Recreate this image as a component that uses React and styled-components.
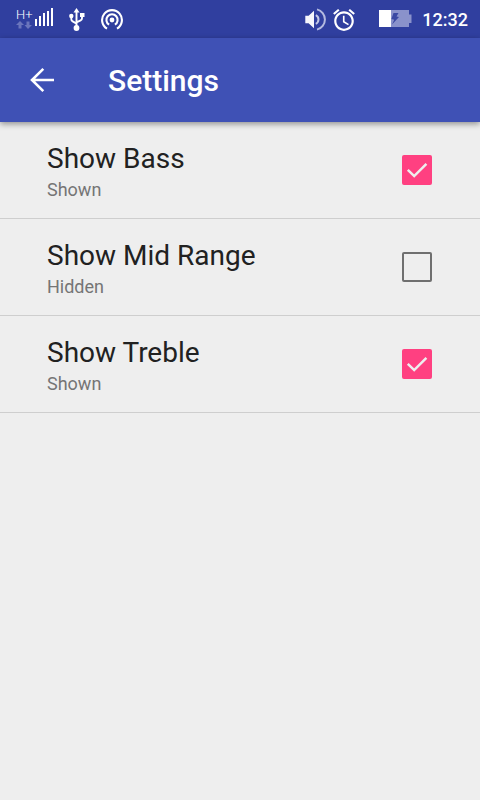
import React, { useState } from "react";
import styled, { createGlobalStyle } from "styled-components";

const GlobalStyle = createGlobalStyle`
  *, *::before, *::after { box-sizing: border-box; }
  body {
    margin: 0;
    background: #eeeeee;
    font-family: Roboto, sans-serif;
  }
`;

const StatusBar = styled.div`
  display: flex;
  align-items: center;
  justify-content: space-between;
  height: 38px;
  padding: 2px 12px 0 16px;
  background: #303f9f;
  color: #ffffff;
`;

const StatusGroup = styled.div`
  display: flex;
  align-items: center;
  gap: ${(p) => p.$gap}px;

  svg {
    display: block;
    flex: none;
  }
`;

const Network = styled.div`
  display: flex;
  align-items: flex-start;
  gap: 3px;
  height: 24px;
`;

const NetworkType = styled.div`
  display: flex;
  flex-direction: column;
  width: 16px;
  font-size: 13px;
  font-weight: 300;
  line-height: 13px;
`;

const Clock = styled.time`
  font-size: 18px;
  font-weight: 500;
  line-height: 24px;
`;

const AppBar = styled.header`
  display: flex;
  align-items: center;
  gap: 48px;
  height: 84px;
  padding: 0 24px;
  background: #3f51b5;
  color: #ffffff;
  box-shadow: 0 2px 6px rgba(0, 0, 0, 0.4);
`;

const BackButton = styled.button`
  display: block;
  width: 36px;
  height: 36px;
  padding: 0;
  border: 0;
  background: none;
  color: inherit;
  cursor: pointer;

  svg {
    display: block;
  }
`;

const Title = styled.h1`
  margin: 0;
  padding-top: 2px;
  font-size: 30px;
  font-weight: 500;
  line-height: 36px;
`;

const PreferenceList = styled.main`
  display: flex;
  flex-direction: column;
`;

const Preference = styled.label`
  display: flex;
  align-items: center;
  justify-content: space-between;
  min-height: 97px;
  padding: 0 48px 0 47px;
  border-bottom: 1px solid #cecece;
  cursor: pointer;
`;

const PreferenceText = styled.span`
  display: flex;
  flex-direction: column;
  padding-top: 4px;
`;

const PreferenceName = styled.span`
  color: #212121;
  font-size: 28px;
  line-height: 36px;
`;

const PreferenceSummary = styled.span`
  color: #757575;
  font-size: 18px;
  line-height: 26px;
`;

const CheckSlot = styled.span`
  display: grid;
  flex: none;

  > * {
    grid-area: 1 / 1;
  }

  svg {
    pointer-events: none;
  }
`;

const CheckInput = styled.input`
  appearance: none;
  width: 30px;
  height: 30px;
  margin: 0;
  border: 2px solid #6f6f6f;
  border-radius: 2px;
  cursor: pointer;

  &:checked {
    border-color: #ff4081;
    background: #ff4081;
  }
`;

const DataArrows = () => (
  <svg width="16" height="8" viewBox="0 0 16 8" fill="#6a75bc" aria-hidden="true">
    <path d="M4 0L8 4H5.5V7.5H2.5V4H0Z" />
    <path d="M12 8L8.5 4H10.5V0.5H13.5V4H16Z" />
  </svg>
);

const SignalBars = () => (
  <svg width="18" height="18" viewBox="0 0 18 18" fill="#fff" aria-hidden="true">
    <rect x="0" y="11" width="2" height="7" />
    <rect x="4" y="8" width="2" height="10" />
    <rect x="8" y="5" width="2" height="13" />
    <rect x="12" y="3" width="2" height="15" />
    <rect x="16" y="0" width="2" height="18" />
  </svg>
);

const UsbIcon = () => (
  <svg width="16" height="24" viewBox="0 0 16 24" fill="#fff" aria-hidden="true">
    <path d="M7.5 0L10.5 4.5H4.5Z" />
    <circle cx="7.5" cy="20" r="2.9" />
    <circle cx="2.3" cy="8" r="2.2" />
    <rect x="11" y="5" width="4.5" height="4" />
    <path
      d="M7.5 3V19M2.3 8V11Q2.3 12.6 3.7 13.4L7.5 15.6M13 8V10.2Q13 11.6 11.6 12.3L7.5 14.4"
      fill="none"
      stroke="#fff"
      strokeWidth="1.9"
    />
  </svg>
);

const HotspotIcon = () => (
  <svg width="22" height="22" viewBox="0 0 22 22" fill="none" stroke="#fff" strokeWidth="2.1" aria-hidden="true">
    <circle cx="11" cy="11" r="2.4" fill="#fff" stroke="none" />
    <path d="M6 19.6A9.9 9.9 0 1 1 16 19.6" />
    <path d="M8.1 15.7A5.6 5.6 0 1 1 13.9 15.7" />
  </svg>
);

const VolumeIcon = () => (
  <svg width="22" height="24" viewBox="0 0 22 24" fill="none" aria-hidden="true">
    <path d="M0.3 7.8H3.6L9 2.8V20.2L3.6 15.2H0.3Z" fill="#f6f7fc" />
    <path d="M10.8 7.2A4.8 4.8 0 0 1 10.8 15.8" stroke="#c2c7e5" strokeWidth="2" />
    <path d="M12 1.4A10.4 10.4 0 0 1 12 21.6" stroke="#b4bae0" strokeWidth="2" />
  </svg>
);

const AlarmIcon = () => (
  <svg width="22" height="22" viewBox="2 1.9 20 20.2" fill="#fff" aria-hidden="true">
    <path d="M22 5.72l-4.6-3.86-1.29 1.53 4.6 3.86L22 5.72zM7.88 3.39L6.6 1.86 2 5.71l1.29 1.53 4.59-3.85zM12.5 8H11v6l4.75 2.85.75-1.23-4-2.37V8zM12 4c-4.97 0-9 4.03-9 9s4.02 9 9 9c4.97 0 9-4.03 9-9s-4.03-9-9-9zm0 16c-3.87 0-7-3.13-7-7s3.13-7 7-7 7 3.13 7 7-3.13 7-7 7z" />
  </svg>
);

const BatteryIcon = () => (
  <svg width="33" height="20" viewBox="0 0 33 20" aria-hidden="true">
    <path d="M12 0H30V4.5H32.5V13H30V17H12Z" fill="#8a92cb" />
    <rect width="12" height="17" fill="#fff" />
    <path d="M14.5 3H19.5L17.5 6.5L20 7L13 14.5L15.2 9.8L12.4 9Z" fill="#3a48a3" />
  </svg>
);

const BackIcon = () => (
  <svg width="36" height="36" viewBox="0 0 36 36" fill="none" stroke="#fff" strokeWidth="2.6" aria-hidden="true">
    <path d="M30 18H8M19.3 6.8L8 18L19.3 29.2" />
  </svg>
);

const CheckMark = () => (
  <svg width="30" height="30" viewBox="0 0 30 30" fill="none" stroke="#eeeeee" strokeWidth="2.5" aria-hidden="true">
    <path d="M5.8 14.8L12.2 21.1L24.4 8.9" />
  </svg>
);

const initialPreferences = [
  { id: "bass", name: "Show Bass", shown: true },
  { id: "mid", name: "Show Mid Range", shown: false },
  { id: "treble", name: "Show Treble", shown: true },
];

export default function App() {
  const [preferences, setPreferences] = useState(initialPreferences);

  const toggle = (id) =>
    setPreferences((list) =>
      list.map((item) => (item.id === id ? { ...item, shown: !item.shown } : item))
    );

  return (
    <>
      <GlobalStyle />
      <StatusBar>
        <StatusGroup $gap={16}>
          <Network>
            <NetworkType>
              H+
              <DataArrows />
            </NetworkType>
            <SignalBars />
          </Network>
          <UsbIcon />
          <HotspotIcon />
        </StatusGroup>
        <StatusGroup $gap={10}>
          <StatusGroup $gap={24}>
            <StatusGroup $gap={6}>
              <VolumeIcon />
              <AlarmIcon />
            </StatusGroup>
            <BatteryIcon />
          </StatusGroup>
          <Clock>12:32</Clock>
        </StatusGroup>
      </StatusBar>
      <AppBar>
        <BackButton type="button" aria-label="Back">
          <BackIcon />
        </BackButton>
        <Title>Settings</Title>
      </AppBar>
      <PreferenceList>
        {preferences.map(({ id, name, shown }) => (
          <Preference key={id} htmlFor={id}>
            <PreferenceText>
              <PreferenceName>{name}</PreferenceName>
              <PreferenceSummary>{shown ? "Shown" : "Hidden"}</PreferenceSummary>
            </PreferenceText>
            <CheckSlot>
              <CheckInput id={id} type="checkbox" checked={shown} onChange={() => toggle(id)} />
              {shown && <CheckMark />}
            </CheckSlot>
          </Preference>
        ))}
      </PreferenceList>
    </>
  );
}
